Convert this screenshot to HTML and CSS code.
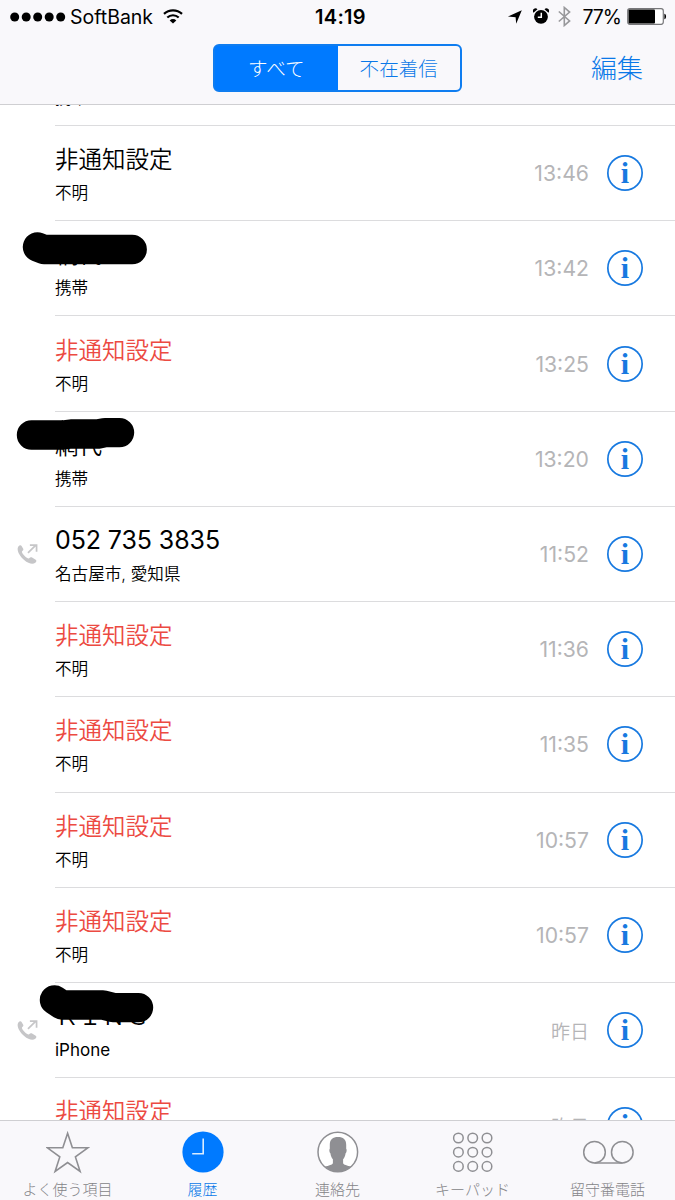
FILE: index.html
```html
<!DOCTYPE html>
<html lang="ja">
<head>
    <meta charset="UTF-8">
    <meta name="viewport" content="width=device-width, initial-scale=1.0">
    <title>履歴</title>
    <link rel="stylesheet" href="styles.css">
</head>
<body>
    <svg class="defs" width="0" height="0" aria-hidden="true">
        <symbol id="outgoing" viewBox="0 0 22 22">
            <path d="M1.400 2.600C2.600 1.200 4 .9 4.800 2l1.700 3c.5 1 .1 1.700-1.100 2.600-.7.6.2 2.400 2.400 4.700s4.200 3.400 4.900 2.700c1-1.200 1.700-1.500 2.700-1l4.200 2.500c1.100.8.800 2-.5 3.200-2.100 1.900-7 1.300-11.600-2.900C2.400 12.600-.9 6 1.400 2.600z" fill="#c6c6c8"/>
            <path d="M11.500 9.200L20 .9M13.500 1.200h7v7" fill="none" stroke="#c6c6c8" stroke-width="1.800"/>
        </symbol>
    </svg>

    <div class="phone">
        <header class="top">
            <div class="status">
                <div class="status-left">
                    <svg width="56" height="12" viewBox="0 0 56 12">
                        <circle cx="4.700" cy="6" r="4.500"/>
                        <circle cx="16.200" cy="6" r="4.500"/>
                        <circle cx="27.700" cy="6" r="4.500"/>
                        <circle cx="39.200" cy="6" r="4.500"/>
                        <circle cx="50.700" cy="6" r="4.500"/>
                    </svg>
                    <span class="carrier">SoftBank</span>
                    <svg class="wifi" width="20" height="15" viewBox="0 0 20 15">
                        <path d="M1 4.900a13 13 0 0 1 18 0M4.300 8.500a8.300 8.300 0 0 1 11.400 0" fill="none" stroke="#000" stroke-width="2.200"/>
                        <path d="M10 14.500L6.700 11.400a4.700 4.700 0 0 1 6.600 0z"/>
                    </svg>
                </div>
                <span class="clock">14:19</span>
                <div class="status-right">
                    <svg width="14" height="14" viewBox="0 0 14 14"><path d="M13.800.2L8.200 13.800 7.600 7.300 0 6.500z"/></svg>
                    <svg class="alarm" width="16" height="17" viewBox="0 0 16 17">
                        <circle cx="8" cy="8.800" r="6.900"/>
                        <path d="M.5 4.700a2.600 2.600 0 0 1 4-3.500zM15.500 4.700a2.600 2.600 0 0 0-4-3.500z"/>
                        <path d="M8.300 4.800v4.500H4.800" fill="none" stroke="#fff" stroke-width="1.500"/>
                    </svg>
                    <svg class="bluetooth" width="13" height="21" viewBox="0 0 13 21">
                        <path d="M.8 5.500l10.800 9.400-5.300 4.600v-18l5.300 4.600L.8 15.500" fill="none" stroke="#98989b" stroke-width="1.600"/>
                    </svg>
                    <span class="percent">77%</span>
                    <svg class="battery" width="40" height="17" viewBox="0 0 40 17">
                        <rect x=".7" y=".7" width="35.600" height="15.600" rx="2.200" fill="#fff" stroke="#77777a" stroke-width="1.200"/>
                        <rect x="1.500" y="1.500" width="26.500" height="14" rx="1"/>
                        <path d="M37.400 5.700c2.200.4 2.200 5.200 0 5.600z"/>
                    </svg>
                </div>
            </div>
            <nav class="nav">
                <div class="segmented">
                    <button class="segment active">すべて</button>
                    <button class="segment">不在着信</button>
                </div>
                <a class="edit" href="#">編集</a>
            </nav>
        </header>

        <main class="calls">
            <ul class="call-list">
                <li class="call">
                    <div class="call-body">
                        <div class="who"><p class="name"></p><p class="kind">携帯</p></div>
                    </div>
                </li>
                <li class="call">
                    <div class="call-body">
                        <div class="who"><p class="name">非通知設定</p><p class="kind">不明</p></div>
                        <span class="time">13:46</span><span class="info">i</span>
                    </div>
                </li>
                <li class="call">
                    <div class="call-body">
                        <div class="who"><p class="name">網代</p><p class="kind">携帯</p></div>
                        <span class="time">13:42</span><span class="info">i</span>
                    </div>
                    <svg class="marker" viewBox="0 0 180 60"><path d="M37.500 26L44 28.500H132.200"/></svg>
                </li>
                <li class="call missed">
                    <div class="call-body">
                        <div class="who"><p class="name">非通知設定</p><p class="kind">不明</p></div>
                        <span class="time">13:25</span><span class="info">i</span>
                    </div>
                </li>
                <li class="call">
                    <div class="call-body">
                        <div class="who"><p class="name">網代</p><p class="kind">携帯</p></div>
                        <span class="time">13:20</span><span class="info">i</span>
                    </div>
                    <svg class="marker" viewBox="0 0 180 60"><path d="M31.500 23H63L71 22H98L105 20.600H119.500"/></svg>
                </li>
                <li class="call">
                    <svg class="outgoing"><use href="#outgoing"/></svg>
                    <div class="call-body">
                        <div class="who"><p class="name number">052 735 3835</p><p class="kind">名古屋市, 愛知県</p></div>
                        <span class="time">11:52</span><span class="info">i</span>
                    </div>
                </li>
                <li class="call missed">
                    <div class="call-body">
                        <div class="who"><p class="name">非通知設定</p><p class="kind">不明</p></div>
                        <span class="time">11:36</span><span class="info">i</span>
                    </div>
                </li>
                <li class="call missed">
                    <div class="call-body">
                        <div class="who"><p class="name">非通知設定</p><p class="kind">不明</p></div>
                        <span class="time">11:35</span><span class="info">i</span>
                    </div>
                </li>
                <li class="call missed">
                    <div class="call-body">
                        <div class="who"><p class="name">非通知設定</p><p class="kind">不明</p></div>
                        <span class="time">10:57</span><span class="info">i</span>
                    </div>
                </li>
                <li class="call missed">
                    <div class="call-body">
                        <div class="who"><p class="name">非通知設定</p><p class="kind">不明</p></div>
                        <span class="time">10:57</span><span class="info">i</span>
                    </div>
                </li>
                <li class="call">
                    <svg class="outgoing"><use href="#outgoing"/></svg>
                    <div class="call-body">
                        <div class="who"><p class="name">ＫＩＮＧ</p><p class="kind latin">iPhone</p></div>
                        <span class="time day">昨日</span><span class="info">i</span>
                    </div>
                    <svg class="marker" viewBox="0 0 180 60"><path d="M54.500 17L62 22H103L113 24.600H138.500"/></svg>
                </li>
                <li class="call missed">
                    <div class="call-body">
                        <div class="who"><p class="name">非通知設定</p><p class="kind">不明</p></div>
                        <span class="time day">昨日</span><span class="info">i</span>
                    </div>
                </li>
            </ul>
        </main>

        <footer class="tabs">
            <a class="tab" href="#">
                <svg width="44" height="44" viewBox="0 0 44 44"><path d="M21.600 3.200l4.800 14.600H41.800L29.400 26.900l4.700 14.600L21.600 32.500 9.100 41.500l4.700-14.600L1.400 17.800h15.400z" fill="none" stroke="#8f8f93" stroke-width="1.600"/></svg>
                <span>よく使う項目</span>
            </a>
            <a class="tab active" href="#">
                <svg width="44" height="44" viewBox="0 0 44 44"><circle cx="22" cy="22" r="20.600" fill="#007aff"/><path d="M22.200 8.500v15.200H11.200" fill="none" stroke="#d9ecff" stroke-width="1.600"/></svg>
                <span>履歴</span>
            </a>
            <a class="tab" href="#">
                <svg width="44" height="44" viewBox="0 0 44 44"><circle cx="21.800" cy="22" r="19.800" fill="#fff" stroke="#8f8f93" stroke-width="1.500"/><path d="M22 7c5.300 0 8.300 2.600 8.200 8v3.700c.7.300.6 3.400-.6 4.600-.4 2.900-1.300 4.700-2.500 6v3.600c.3 2 4.200 2.400 8.200 3.800A19.800 19.800 0 0 1 8.700 36.700c4-1.400 7.900-1.800 8.200-3.800v-3.600c-1.200-1.300-2.100-3.100-2.500-6-1.200-1.200-1.300-4.300-.6-4.600V15c-.1-5.400 2.900-8 8.200-8z" fill="#8f8f93"/></svg>
                <span>連絡先</span>
            </a>
            <a class="tab" href="#">
                <svg width="44" height="44" viewBox="0 0 44 44" fill="none" stroke="#8f8f93" stroke-width="1.500">
                    <circle cx="7.400" cy="8" r="4.800"/><circle cx="21.700" cy="8" r="4.800"/><circle cx="36" cy="8" r="4.800"/>
                    <circle cx="7.400" cy="22.200" r="4.800"/><circle cx="21.700" cy="22.200" r="4.800"/><circle cx="36" cy="22.200" r="4.800"/>
                    <circle cx="7.400" cy="36.400" r="4.800"/><circle cx="21.700" cy="36.400" r="4.800"/><circle cx="36" cy="36.400" r="4.800"/>
                </svg>
                <span>キーパッド</span>
            </a>
            <a class="tab" href="#">
                <svg width="52" height="44" viewBox="0 0 52 44" fill="none" stroke="#8f8f93" stroke-width="1.500"><circle cx="12.500" cy="22.200" r="10.800"/><circle cx="40.300" cy="22.200" r="10.800"/><path d="M12.500 33h28"/></svg>
                <span>留守番電話</span>
            </a>
        </footer>
    </div>
</body>
</html>
```
FILE: styles.css
```css
body {
    margin: 0;
    font-family: "Inter", "Noto Sans CJK JP", sans-serif;
    font-weight: 400;
    color: #000;
    background: #fff;
}

p, ul {
    margin: 0;
    padding: 0;
    list-style: none;
}

a {
    text-decoration: none;
}

svg {
    display: block;
    flex: none;
}

.defs {
    position: absolute;
}

.phone {
    display: flex;
    flex-direction: column;
    height: 1200px;
    overflow: hidden;
}

/* status bar and navigation */
.top {
    flex: none;
    box-sizing: border-box;
    height: 105px;
    background: #f9f8fb;
    border-bottom: 1px solid #cfcfd2;
}

.status {
    display: grid;
    grid-template-columns: 1fr auto 1fr;
    align-items: center;
    height: 32px;
    padding: 0 8px 0 10px;
    font-size: 19.5px;
    line-height: 32px;
}

.status-left, .status-right {
    display: flex;
    align-items: center;
}

.status-right {
    justify-content: flex-end;
}

.carrier {
    margin-left: 4px;
    padding-top: 1px;
}

.wifi {
    margin-left: 10px;
}

.clock {
    font-size: 20px;
    font-weight: 600;
    letter-spacing: 0.3px;
    padding: 1px 0 0 4px;
}

.alarm {
    margin-left: 11px;
}

.bluetooth {
    margin-left: 9px;
}

.percent {
    margin-left: 11px;
    padding-top: 1px;
    letter-spacing: -1px;
}

.battery {
    margin-left: 6px;
}

.nav {
    display: grid;
    grid-template-columns: 1fr 249px 1fr;
    align-items: center;
    padding: 12px 32px 0;
}

.segmented {
    grid-column: 2;
    display: flex;
    box-sizing: border-box;
    height: 48px;
    border: 2px solid #0f7df0;
    border-radius: 6px;
    background: #007aff;
    overflow: hidden;
}

.segment {
    flex: 1;
    padding: 0 0 2px;
    border: 0;
    background: #f9f8fb;
    color: #0a78e8;
    font-family: inherit;
    font-size: 19.6px;
    font-weight: 300;
}

.segment.active {
    background: #007aff;
    color: #fff;
}

.edit {
    justify-self: end;
    color: #0a78e8;
    font-size: 26px;
    font-weight: 300;
    line-height: 46px;
    padding-top: 2px;
}

/* call history */
.calls {
    flex: 1;
    min-height: 0;
    overflow: hidden;
}

.call-list {
    margin-top: -74.2px;
}

.call {
    position: relative;
    display: grid;
    grid-template-columns: 55px 1fr;
    align-items: center;
    height: 95.23px;
}

.call-body {
    grid-column: 2;
    display: flex;
    align-items: center;
    box-sizing: border-box;
    height: 100%;
    padding-right: 32px;
    border-bottom: 1px solid #dcdcde;
}

.who {
    flex: 1;
    padding-top: 2px;
}

.name {
    height: 34px;
    font-size: 23.5px;
    font-weight: 350;
    line-height: 33px;
}

.number {
    font-size: 25px;
    font-weight: 400;
    letter-spacing: -0.1px;
}

.kind {
    font-size: 16.6px;
    font-weight: 350;
    line-height: 24px;
    margin-top: 4px;
}

.latin {
    font-size: 17px;
    font-weight: 400;
}

.missed .name {
    color: #ec4a42;
}

.time {
    color: #b5b5b7;
    font-size: 21.2px;
    font-weight: 400;
}

.day {
    font-size: 19px;
    font-weight: 350;
}

.info {
    width: 36px;
    height: 36px;
    margin-left: 18px;
    border-radius: 50%;
    box-shadow: inset 0 0 0 1.7px #1779e0;
    color: #1779e0;
    font: bold 30px/35px "Liberation Serif", serif;
    text-align: center;
}

.outgoing {
    grid-row: 1;
    width: 21px;
    height: 21px;
    margin-left: 17px;
}

/* strokes drawn over the hidden names */
.marker {
    position: absolute;
    left: 0;
    top: 0;
    width: 180px;
    height: 60px;
    overflow: visible;
    fill: none;
    stroke: #000;
    stroke-width: 29.4px;
    stroke-linecap: round;
    stroke-linejoin: round;
}

/* tab bar */
.tabs {
    flex: none;
    display: grid;
    grid-template-columns: repeat(5, 1fr);
    box-sizing: border-box;
    height: 80px;
    background: #f9f8fb;
    border-top: 1px solid #cfcfd2;
}

.tab {
    display: flex;
    flex-direction: column;
    align-items: center;
    padding-top: 9px;
    color: #848488;
    font-size: 15px;
    font-weight: 300;
    line-height: 22px;
}

.tab span {
    margin-top: 5px;
}

.tab.active {
    color: #0a78e8;
}
```
